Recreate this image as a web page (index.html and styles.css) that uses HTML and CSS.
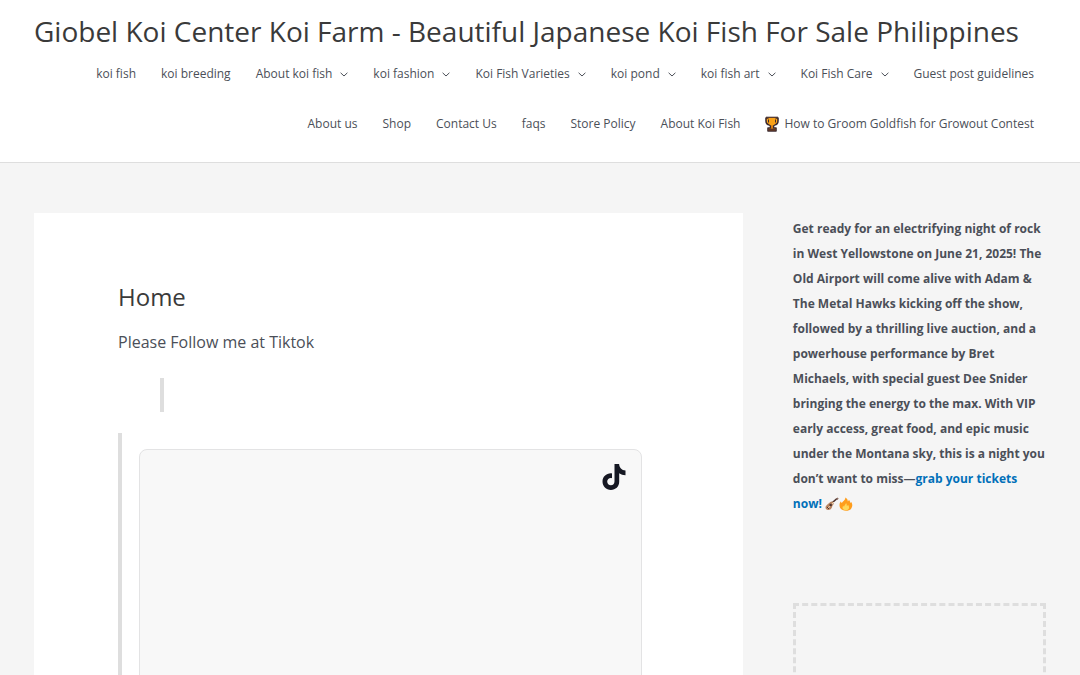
FILE: index.html
```html
<!DOCTYPE html>
<html lang="en">
<head>
    <meta charset="UTF-8">
    <meta name="viewport" content="width=device-width, initial-scale=1.0">
    <title>Giobel Koi Center Koi Farm</title>
    <link rel="stylesheet" href="styles.css">
</head>
<body>
    <svg class="sprite" aria-hidden="true">
        <symbol id="chevron" viewBox="0 0 8 8">
            <path d="M.6 2.800 4 6 7.400 2.800" fill="none" stroke="currentColor" stroke-width="1"/>
        </symbol>
    </svg>

    <header class="site-header">
        <div class="container">
            <p class="site-title"><a href="#">Giobel Koi Center Koi Farm - Beautiful Japanese Koi Fish For Sale Philippines</a></p>
            <nav class="main-nav" aria-label="Site">
                <ul class="menu">
                    <li><a href="#">koi fish</a></li>
                    <li><a href="#">koi breeding</a></li>
                    <li><a href="#">About koi fish <svg class="arrow"><use href="#chevron"/></svg></a></li>
                    <li><a href="#">koi fashion <svg class="arrow"><use href="#chevron"/></svg></a></li>
                    <li><a href="#">Koi Fish Varieties <svg class="arrow"><use href="#chevron"/></svg></a></li>
                    <li><a href="#">koi pond <svg class="arrow"><use href="#chevron"/></svg></a></li>
                    <li><a href="#">koi fish art <svg class="arrow"><use href="#chevron"/></svg></a></li>
                    <li><a href="#">Koi Fish Care <svg class="arrow"><use href="#chevron"/></svg></a></li>
                    <li><a href="#">Guest post guidelines</a></li>
                    <li><a href="#">About us</a></li>
                    <li><a href="#">Shop</a></li>
                    <li><a href="#">Contact Us</a></li>
                    <li><a href="#">faqs</a></li>
                    <li><a href="#">Store Policy</a></li>
                    <li><a href="#">About Koi Fish</a></li>
                    <li>
                        <a href="#">
                            <svg class="trophy" viewBox="0 0 14 16" aria-hidden="true">
                                <path d="M1 2h12v3c0 2-1 3.500-3.500 4L8.500 10v2H11v3H3v-3h2.500v-2l-1-1C2 8.500 1 7 1 5z" fill="#ffa51a" stroke="#3c2b30" stroke-width="1.600" stroke-linejoin="round"/>
                                <path d="M3.500 1h7v5c0 2-1.500 3.500-3.500 3.500S3.500 8 3.500 6z" fill="#f9a116"/>
                                <path d="M3.500 3.500v3M10.500 3.500v3" stroke="#3c2b30"/>
                                <path d="M1 1.300h12" stroke="#4b3432" stroke-width="1.200"/>
                                <path d="M7 9.500v3" stroke="#d47a12" stroke-width="2"/>
                                <path d="M3.500 13.800h7" stroke="#5b3527" stroke-width="2.400"/>
                            </svg>
                            How to Groom Goldfish for Growout Contest
                        </a>
                    </li>
                </ul>
            </nav>
        </div>
    </header>

    <div class="container content">
        <main class="primary">
            <h1>Home</h1>
            <p>Please Follow me at Tiktok</p>
            <blockquote class="quote quote-empty"></blockquote>
            <blockquote class="quote">
                <div class="embed">
                    <a href="#" aria-label="TikTok">
                        <svg class="tiktok" viewBox="0 0 24 28" aria-hidden="true">
                            <path d="M12.500 1h4.600c.2 3.700 2.600 6.200 6.400 6.500v4.700c-2.500 0-4.600-.8-6.300-2v8.600c0 4.800-3.700 8.200-8.300 8.200-4.800 0-8.400-3.800-8.400-8.400 0-5 4.200-8.800 9.500-8.200v4.800c-2.600-.7-4.800 1-4.800 3.400 0 2.100 1.600 3.700 3.700 3.700 2.200 0 3.600-1.600 3.600-4z" fill="#161823"/>
                        </svg>
                    </a>
                </div>
            </blockquote>
        </main>

        <aside class="sidebar">
            <p class="promo">
                Get ready for an electrifying night of rock in West Yellowstone on June 21, 2025! The Old Airport will come alive with Adam &amp; The Metal Hawks kicking off the show, followed by a thrilling live auction, and a powerhouse performance by Bret Michaels, with special guest Dee Snider bringing the energy to the max. With VIP early access, great food, and epic music under the Montana sky, this is a night you don’t want to miss—<a href="#">grab your tickets now!</a>
                <svg class="emoji" viewBox="0 0 14 14" aria-hidden="true">
                    <path d="M7.500 5.500 12 1.500" stroke="#4e342e" stroke-width="1.600"/>
                    <path d="M11 1.800 12.500.5 13.700 1.600 12.300 3z" fill="#8d6e63"/>
                    <path d="M5 5.300c1-1 2.500-.9 3.200 0 .8.900.6 2-.2 2.700-.7.600-.7 1.300-1 2.300-.5 1.900-2.700 3.200-4.800 2.500C.2 12 .1 9.900 1.200 8.700c1.100-1.300 3-2.500 3.800-3.400z" fill="#b98560"/>
                    <path d="M3 11.200 9 5" stroke="#e8d2b6"/>
                    <circle cx="5.700" cy="8" r="1.300" fill="#4e342e"/>
                    <path d="m2 10 2 2" stroke="#4e342e"/>
                </svg><svg class="emoji" viewBox="0 0 14 14" aria-hidden="true">
                    <path d="M6.300.5c1.600.8 2.600 2.300 2.500 4 .7-.4 1-1 1-1.700C11 3.700 11 5 11.300 6c.5-.2.700-.8.600-1.300 1.800 2.100 1.800 4.800.4 6.700C11 13.200 9 13.800 7 13.800c-3.300 0-6.400-2-6.500-5.300C.4 6.500 1.300 5 2 4.300c0 .8.300 1.500 1 1.700C3.700 4 6.500 3.500 6.300.5z" fill="#ff9d1c"/>
                    <path d="M7 6c1 1 .8 2 .7 2.800.7 0 1.200-.4 1.300-1 1.600 1.600 1.700 5.300-2 5.500-3.500 0-4.200-2.800-2.800-4.500.2.600.6.8 1 .8C5 8.500 6.800 7.500 7 6z" fill="#ffd85b"/>
                </svg>
            </p>
            <div class="ad-slot"></div>
        </aside>
    </div>
</body>
</html>
```

FILE: styles.css
```css
* { box-sizing: border-box; }
body { margin: 0; background: #f5f5f5; color: #4b4f58; font-family: "Segoe UI", "Open Sans", sans-serif; font-size: 16px; line-height: 28px; }
a { color: #0170b9; text-decoration: none; }
p { margin: 0; }
.sprite { display: none; }
.container { max-width: 1240px; margin: 0 auto; padding: 0 34px; }

/* header */
.site-header { background: #fff; border-bottom: 1px solid #dedede; padding: 13px 0; }
.site-title { font-size: 28px; line-height: 36px; white-space: nowrap; }
.site-title a { color: #3a3a3a; }
.menu { display: flex; flex-wrap: wrap; justify-content: flex-end; column-gap: 25px; margin: 0; padding: 0 12px; list-style: none; }
.menu a { display: flex; align-items: center; color: #4b4f58; font-size: 12px; line-height: 50px; white-space: nowrap; }
.arrow { width: 8px; height: 8px; margin-left: 8px; }
.trophy { width: 14px; height: 16px; margin-right: 5px; }

/* content */
.content { display: grid; grid-template-columns: 14fr 5fr; gap: 50px; padding-top: 50px; }
.primary { min-height: 800px; padding: 67px 84px; background: #fff; }
.primary h1 { margin: 0 0 14px; color: #3a3a3a; font-size: 24px; font-weight: 400; line-height: 34px; }
.quote { margin: 21px 0 0; padding: 16px 17px; border-left: 4px solid #dedede; }
.quote-empty { height: 34px; margin: 22px 42px 0; }
.embed { display: flex; justify-content: flex-end; height: 560px; padding: 13px 15px; background: #f8f8f8; border: 1px solid #e3e3e4; border-radius: 8px; }
.tiktok { display: block; width: 24px; height: 28px; }

/* sidebar */
.promo { padding-top: 3px; font-size: 12px; font-weight: 700; line-height: 25px; }
.emoji { width: 14px; height: 14px; vertical-align: -3px; }
.ad-slot { height: 250px; margin-top: 87px; border: 3px dashed #dedede; }
```
